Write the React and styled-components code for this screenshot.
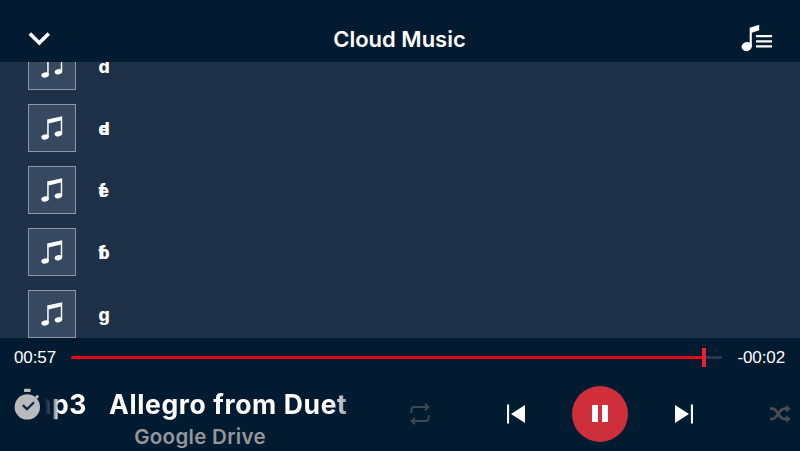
import React from 'react';
import styled, { createGlobalStyle } from 'styled-components';

const Global = createGlobalStyle`
  * { box-sizing: border-box; }
  body { margin: 0; background: #031b31; }
`;

const Player = styled.div`
  display: flex;
  flex-direction: column;
  width: 800px;
  height: 451px;
  overflow: hidden;
  background: #031b31;
  color: #fff;
  font-family: Inter, sans-serif;
`;

const Header = styled.header`
  display: grid;
  grid-template-columns: 60px 1fr 60px;
  align-items: center;
  height: 62px;
  flex: none;
  padding: 16px 28px 0 27px;
`;

const Title = styled.h1`
  margin: 0;
  text-align: center;
  font: 600 22px/30px Inter, sans-serif;
  white-space: nowrap;
`;

const IconButton = styled.button`
  display: flex;
  align-items: center;
  justify-content: ${(p) => p.$align || 'center'};
  width: ${(p) => p.$width || 'auto'};
  padding: 0;
  border: 0;
  background: none;
  color: ${(p) => p.$color || '#fff'};
  svg { display: block; flex: none; }
`;

const TrackList = styled.ul`
  display: flex;
  flex-direction: column;
  justify-content: flex-end;
  gap: 14px;
  height: 276px;
  flex: none;
  margin: 0;
  padding: 0 28px;
  overflow: hidden;
  list-style: none;
  background: #1d3047;
`;

const Track = styled.li`
  display: flex;
  align-items: center;
  gap: 22.5px;
  height: 48px;
  flex: none;
`;

const Cover = styled.div`
  display: grid;
  place-items: center;
  width: 48px;
  height: 48px;
  border: 1px solid #8996a7;
  background: #364960;
`;

const TrackName = styled.div`
  display: grid;
  padding-top: 1px;
  font: 800 17.5px/24px Inter, sans-serif;
`;

const NameLayer = styled.span`
  grid-area: 1 / 1;
`;

const Progress = styled.div`
  display: grid;
  grid-template-columns: 57px 651px 1fr;
  align-items: center;
  height: 38px;
  flex: none;
  padding: 0 15px 0 14px;
`;

const Time = styled.span`
  font: 400 17px/20px 'Liberation Sans', Arial, sans-serif;
  letter-spacing: -0.1px;
  padding-top: 2px;
  text-align: ${(p) => p.$align || 'left'};
`;

const Rail = styled.div`
  display: flex;
  align-items: center;
  height: 19px;
`;

const Played = styled.div`
  width: 631px;
  height: 3px;
  border-radius: 2px 0 0 2px;
  background: #e20c18;
`;

const Thumb = styled.div`
  width: 4px;
  height: 19px;
  background: #f01f2b;
`;

const Remaining = styled.div`
  flex: 1;
  height: 3px;
  border-radius: 0 2px 2px 0;
  background: #283c51;
`;

const Footer = styled.footer`
  display: grid;
  grid-template-columns: 44px 356px 400px;
  height: 75px;
  flex: none;
`;

const TimerSlot = styled.div`
  padding: 12px 0 0 14px;
`;

const NowPlaying = styled.div`
  display: flex;
  flex-direction: column;
  width: 312px;
  padding-top: 11px;
`;

const Marquee = styled.div`
  display: flex;
  gap: 22px;
  width: 306px;
  height: 34px;
  overflow: hidden;
  white-space: pre;
  font: 700 26.5px/34px Inter, sans-serif;
  letter-spacing: 0.62px;
  mask-image: linear-gradient(90deg, transparent 0, rgba(0, 0, 0, 0.3) 8px, #000 15px, #000 286px, rgba(0, 0, 0, 0.5) 306px);
`;

const Trailing = styled.span`
  display: flex;
  justify-content: flex-end;
  width: 43px;
  flex: none;
`;

const Song = styled.span`
  flex: none;
`;

const Source = styled.div`
  margin-top: 3px;
  text-align: center;
  font: 600 20.5px/26px Inter, sans-serif;
  letter-spacing: 0.3px;
  color: #93979c;
`;

const Controls = styled.div`
  display: flex;
  justify-content: space-between;
  align-items: center;
  height: 75px;
`;

const Transport = styled.div`
  display: grid;
  grid-template-columns: repeat(3, 84px);
  place-items: center;
`;

const PauseButton = styled.button`
  display: flex;
  align-items: center;
  justify-content: center;
  gap: 4px;
  width: 56px;
  height: 56px;
  padding: 0;
  border: 0;
  border-radius: 50%;
  background: #cf2e3b;
`;

const PauseBar = styled.span`
  width: 6px;
  height: 17px;
  background: #fff;
`;

const Chevron = () => (
  <svg width="24" height="16" viewBox="0 0 24 16" fill="none" stroke="#fff" strokeWidth="3.7">
    <path d="M2.8 2.5 12.3 12 21.8 2.5" />
  </svg>
);

const QueueIcon = () => (
  <svg width="31" height="30" viewBox="0 0 31 30" fill="#fff">
    <ellipse cx="5.7" cy="22.6" rx="5.2" ry="4.5" transform="rotate(-14 5.7 22.6)" />
    <path d="M8.7 3.7 18.2.7v5.6L10.8 8.8V22H8.7Z" />
    <path d="M15 11.1h16v2.2H15zM15 16.2h16v2.2H15zM15 21.2h16v2.2H15z" />
  </svg>
);

const NoteIcon = () => (
  <svg width="22" height="24" viewBox="0 0 22 24" fill="#fff">
    <path d="M6.2 3.4 21.2.2v17.7h-1.4V4.6L7.7 7.6v13.5H6.2Z" />
    <ellipse cx="4.1" cy="21" rx="3.8" ry="2.6" transform="rotate(-12 4.1 21)" />
    <ellipse cx="17.4" cy="17.8" rx="3.8" ry="2.6" transform="rotate(-12 17.4 17.8)" />
  </svg>
);

const TimerIcon = () => (
  <svg width="27" height="32" viewBox="0 0 27 32">
    <circle cx="13.3" cy="18.9" r="12.7" fill="#b9babb" />
    <rect x="10" y="0.8" width="6.6" height="3.2" rx=".8" fill="#b9babb" />
    <path d="m21 9 2.2-2.3 1.9 1.8L23 11Z" fill="#b9babb" />
    <path d="m8.8 17.2 4.2 4 7-6.9" fill="none" stroke="#10263a" strokeWidth="2.3" />
  </svg>
);

const RepeatIcon = () => (
  <svg width="20" height="22" viewBox="0 0 20 22" fill="none" stroke="currentColor" strokeWidth="1.9">
    <path d="M1.3 10V7a3 3 0 0 1 3-3h14M15 .8 18.4 4 15 7.3M18.7 12v3a3 3 0 0 1-3 3h-14M5 14.7 1.6 18 5 21.2" />
  </svg>
);

const SkipIcon = ({ forward }) => (
  <svg width="18" height="20" viewBox="0 0 18 20" fill="#fff">
    <g transform={forward ? 'matrix(-1 0 0 1 18 0)' : undefined}>
      <path d="M0 .5h2.1v19H0zM18 1v18L4 10Z" />
    </g>
  </svg>
);

const ShuffleIcon = () => (
  <svg width="21" height="18" viewBox="0 0 21 18" fill="none" stroke="currentColor" strokeWidth="2.6">
    <path d="M0 3.6h2.6c5 0 6 10.4 12 10.4H17M0 14h2.6c5 0 6-10.4 12-10.4H17" />
    <path d="m16 0 4.8 3.8L16 7.6ZM16 10.2l4.8 3.8-4.8 3.8Z" fill="currentColor" stroke="none" />
  </svg>
);

const tracks = [['d'], ['d', 'e'], ['e', 'f'], ['b', 'f'], ['g']];

export default function App() {
  return (
    <Player>
      <Global />
      <Header>
        <IconButton $align="flex-start" aria-label="Close"><Chevron /></IconButton>
        <Title>Cloud Music</Title>
        <IconButton $align="flex-end" aria-label="Queue"><QueueIcon /></IconButton>
      </Header>
      <TrackList>
        {tracks.map((layers, index) => (
          <Track key={index}>
            <Cover><NoteIcon /></Cover>
            <TrackName>
              {layers.map((name) => <NameLayer key={name}>{name}</NameLayer>)}
            </TrackName>
          </Track>
        ))}
      </TrackList>
      <Progress>
        <Time>00:57</Time>
        <Rail><Played /><Thumb /><Remaining /></Rail>
        <Time $align="right">-00:02</Time>
      </Progress>
      <Footer>
        <TimerSlot>
          <IconButton aria-label="Sleep timer"><TimerIcon /></IconButton>
        </TimerSlot>
        <NowPlaying>
          <Marquee><Trailing>mp3</Trailing><Song>Allegro from Duet</Song></Marquee>
          <Source>Google Drive</Source>
        </NowPlaying>
        <Controls>
          <IconButton $width="40px" $color="#41474c" aria-label="Repeat"><RepeatIcon /></IconButton>
          <Transport>
            <IconButton aria-label="Previous"><SkipIcon /></IconButton>
            <PauseButton aria-label="Pause"><PauseBar /><PauseBar /></PauseButton>
            <IconButton aria-label="Next"><SkipIcon forward /></IconButton>
          </Transport>
          <IconButton $width="40px" $color="#4b4e50" aria-label="Shuffle"><ShuffleIcon /></IconButton>
        </Controls>
      </Footer>
    </Player>
  );
}
